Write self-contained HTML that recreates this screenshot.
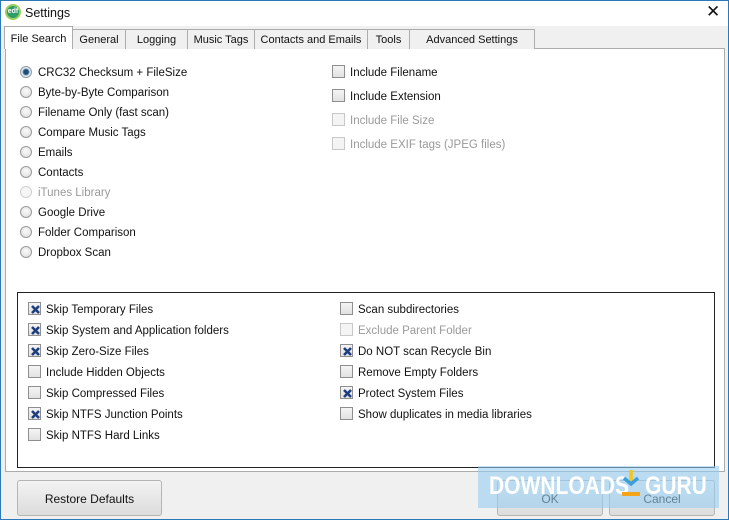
<!DOCTYPE html>
<html><head><meta charset="utf-8"><style>
*{margin:0;padding:0;box-sizing:border-box}
body{width:729px;height:520px;background:#f0f0f0;font-family:"Liberation Sans",sans-serif;font-size:11.5px;color:#111;position:relative;overflow:hidden}
.frame{position:absolute;left:0;top:0;width:729px;height:520px;border:1px solid #2b79b8}
.title{position:absolute;left:1px;top:1px;width:727px;height:25px;background:#fff}
.abs{position:absolute;white-space:nowrap}
.t{margin-top:2px}
.tab{position:absolute;top:29px;height:20px;background:#f0f0f0;border:1px solid #acacac;border-bottom:none;text-align:center;line-height:21px;font-size:11px}
.panel{position:absolute;left:5px;top:48px;width:720px;height:424px;background:#fff;border:1px solid #acacac}
.rad{position:absolute;width:12px;height:12px;border-radius:50%;border:1px solid #9a9a9a;background:radial-gradient(circle at 50% 40%,#fafafa,#dcdcdc)}
.cb{position:absolute;width:13px;height:13px;border:1px solid #8f8f8f;background:linear-gradient(#f4f4f4,#e2e2e2)}
.cb.dis{border-color:#c8c8c8;background:#f4f4f4}
.cb svg{position:absolute;left:1px;top:1px}
.grey{color:#9a9a9a}
.btn{position:absolute;top:480px;height:36px;border:1px solid #b5b5b5;border-radius:3px;background:linear-gradient(#f3f3f3,#dcdcdc);text-align:center;line-height:36px;font-size:12px}
.wm{position:absolute;font-size:25px;font-weight:bold;color:#fff;transform-origin:0 0;white-space:nowrap}
</style></head><body>
<div class="title"></div>
<div class="abs" style="left:5px;top:4px;width:16px;height:16px;border-radius:50%;background:#2e9c6a;border:2px solid #9ad05a;color:#fff;font-size:7px;font-weight:bold;line-height:12px;text-align:center">edf</div>
<div class="abs" style="left:25px;top:6px;font-size:12.5px">Settings</div>
<div class="abs" style="left:706px;top:2px;font-size:17px;font-family:'DejaVu Sans',sans-serif;font-weight:200">✕</div>
<div class="panel"></div>
<div class="tab" style="left:72px;width:54px">General</div>
<div class="tab" style="left:125px;width:63px">Logging</div>
<div class="tab" style="left:187px;width:68px">Music Tags</div>
<div class="tab" style="left:254px;width:114px">Contacts and Emails</div>
<div class="tab" style="left:367px;width:43px">Tools</div>
<div class="tab" style="left:409px;width:126px">Advanced Settings</div>
<div class="tab" style="left:4px;top:26px;width:69px;height:23px;background:#fff;line-height:25px">File Search</div>

<div class="rad" style="left:20px;top:66px;background:radial-gradient(circle,#1f4f74 0 2.5px,#6fa0c8 3px,#dfe9f2 4px)"></div><div class="abs t" style="left:38px;top:65px">CRC32 Checksum + FileSize</div>
<div class="rad" style="left:20px;top:86px"></div><div class="abs t" style="left:38px;top:85px">Byte-by-Byte Comparison</div>
<div class="rad" style="left:20px;top:106px"></div><div class="abs t" style="left:38px;top:105px">Filename Only (fast scan)</div>
<div class="rad" style="left:20px;top:126px"></div><div class="abs t" style="left:38px;top:125px">Compare Music Tags</div>
<div class="rad" style="left:20px;top:146px"></div><div class="abs t" style="left:38px;top:145px">Emails</div>
<div class="rad" style="left:20px;top:166px"></div><div class="abs t" style="left:38px;top:165px">Contacts</div>
<div class="rad" style="left:20px;top:186px;border-color:#d0d0d0;background:#f6f6f6"></div><div class="abs grey t" style="left:38px;top:185px">iTunes Library</div>
<div class="rad" style="left:20px;top:206px"></div><div class="abs t" style="left:38px;top:205px">Google Drive</div>
<div class="rad" style="left:20px;top:226px"></div><div class="abs t" style="left:38px;top:225px">Folder Comparison</div>
<div class="rad" style="left:20px;top:246px"></div><div class="abs t" style="left:38px;top:245px">Dropbox Scan</div>

<div class="cb" style="left:332px;top:65px"></div><div class="abs t" style="left:350px;top:65px">Include Filename</div>
<div class="cb" style="left:332px;top:89px"></div><div class="abs t" style="left:350px;top:89px">Include Extension</div>
<div class="cb dis" style="left:332px;top:113px"></div><div class="abs grey t" style="left:350px;top:113px">Include File Size</div>
<div class="cb dis" style="left:332px;top:137px"></div><div class="abs grey t" style="left:350px;top:137px">Include EXIF tags (JPEG files)</div>

<div class="abs" style="left:17px;top:292px;width:698px;height:176px;border:1px solid #222"></div>
<div class="cb" style="left:28px;top:302px"><svg width="11" height="11"><path d="M2 2L9 9M9 2L2 9" stroke="#1d3f80" stroke-width="2.6"/></svg></div><div class="abs t" style="left:46px;top:302px">Skip Temporary Files</div>
<div class="cb" style="left:28px;top:323px"><svg width="11" height="11"><path d="M2 2L9 9M9 2L2 9" stroke="#1d3f80" stroke-width="2.6"/></svg></div><div class="abs t" style="left:46px;top:323px">Skip System and Application folders</div>
<div class="cb" style="left:28px;top:344px"><svg width="11" height="11"><path d="M2 2L9 9M9 2L2 9" stroke="#1d3f80" stroke-width="2.6"/></svg></div><div class="abs t" style="left:46px;top:344px">Skip Zero-Size Files</div>
<div class="cb" style="left:28px;top:365px"></div><div class="abs t" style="left:46px;top:365px">Include Hidden Objects</div>
<div class="cb" style="left:28px;top:386px"></div><div class="abs t" style="left:46px;top:386px">Skip Compressed Files</div>
<div class="cb" style="left:28px;top:407px"><svg width="11" height="11"><path d="M2 2L9 9M9 2L2 9" stroke="#1d3f80" stroke-width="2.6"/></svg></div><div class="abs t" style="left:46px;top:407px">Skip NTFS Junction Points</div>
<div class="cb" style="left:28px;top:428px"></div><div class="abs t" style="left:46px;top:428px">Skip NTFS Hard Links</div>

<div class="cb" style="left:340px;top:302px"></div><div class="abs t" style="left:358px;top:302px">Scan subdirectories</div>
<div class="cb dis" style="left:340px;top:323px"></div><div class="abs grey t" style="left:358px;top:323px">Exclude Parent Folder</div>
<div class="cb" style="left:340px;top:344px"><svg width="11" height="11"><path d="M2 2L9 9M9 2L2 9" stroke="#1d3f80" stroke-width="2.6"/></svg></div><div class="abs t" style="left:358px;top:344px">Do NOT scan Recycle Bin</div>
<div class="cb" style="left:340px;top:365px"></div><div class="abs t" style="left:358px;top:365px">Remove Empty Folders</div>
<div class="cb" style="left:340px;top:386px"><svg width="11" height="11"><path d="M2 2L9 9M9 2L2 9" stroke="#1d3f80" stroke-width="2.6"/></svg></div><div class="abs t" style="left:358px;top:386px">Protect System Files</div>
<div class="cb" style="left:340px;top:407px"></div><div class="abs t" style="left:358px;top:407px">Show duplicates in media libraries</div>

<div class="btn" style="left:17px;width:145px">Restore Defaults</div>
<div class="btn" style="left:497px;width:106px">OK</div>
<div class="btn" style="left:609px;width:106px">Cancel</div>
<div class="abs" style="left:478px;top:466px;width:241px;height:42px;background:rgba(150,205,240,0.6)"></div>
<div class="wm" style="left:489px;top:472px;transform:scaleX(0.84)">DOWNLOADS</div>
<svg class="abs" style="left:621px;top:470px" width="20" height="28"><path d="M10 0V13" stroke="#f5c518" stroke-width="3.5"/><path d="M3 8L10 14L17 8" stroke="#3aa0e0" stroke-width="3.5" fill="none"/><path d="M1 24H19" stroke="#f5a318" stroke-width="4"/></svg>
<div class="wm" style="left:645px;top:472px;transform:scaleX(0.84)">GURU</div>
<div class="frame"></div>
</body></html>
